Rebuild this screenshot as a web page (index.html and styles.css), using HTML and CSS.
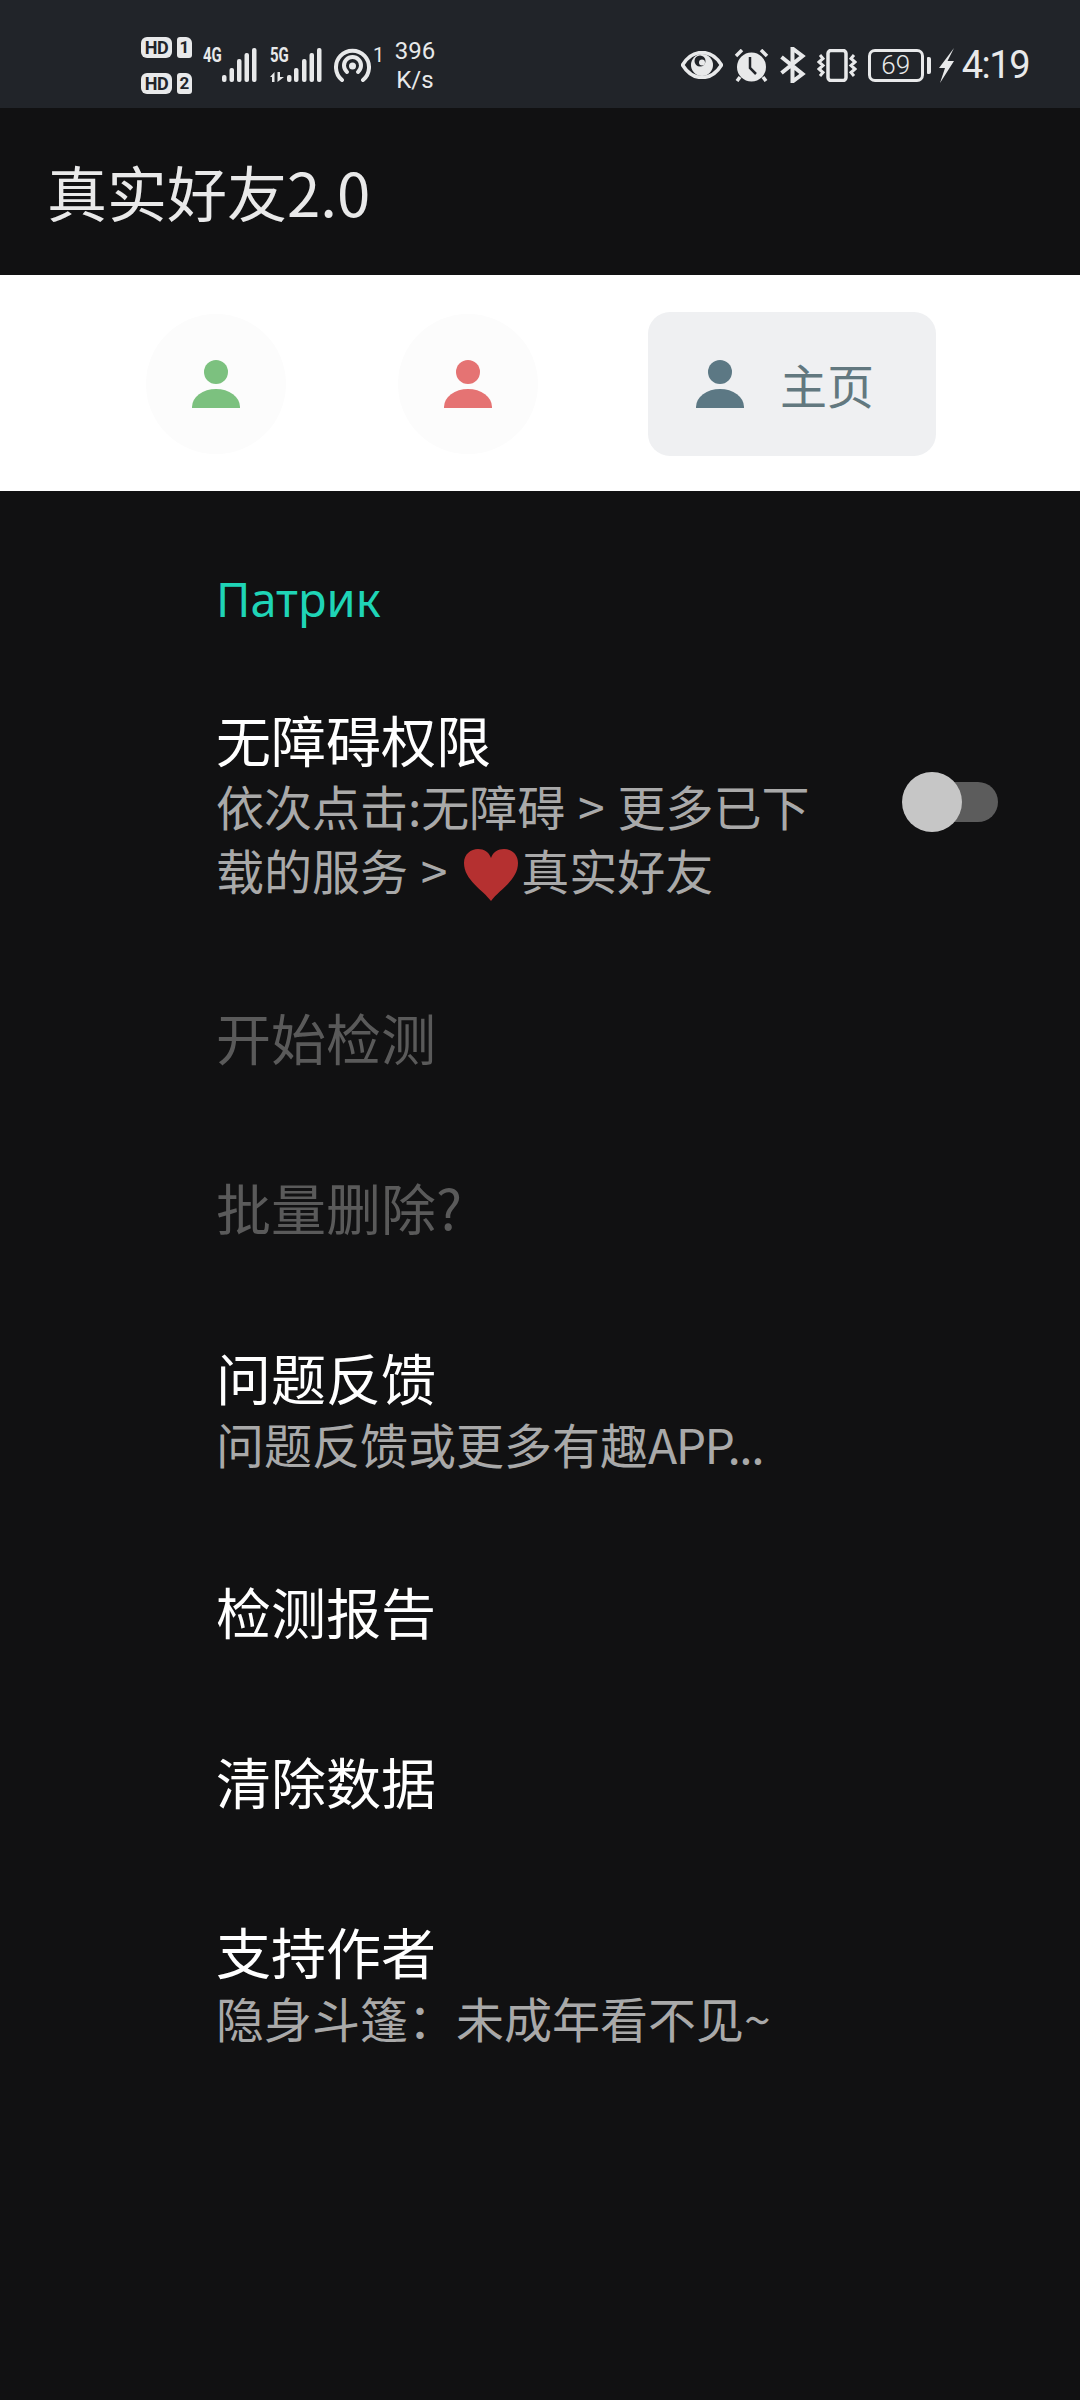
FILE: index.html
```html
<!DOCTYPE html>
<html lang="zh">
<head>
<meta charset="utf-8">
<title>真实好友2.0</title>
<link rel="stylesheet" href="styles.css">
</head>
<body>
<div class="status">
  <div class="status-left">
    <div class="sims">
      <div class="sim"><span class="hd">HD</span><span class="simnum">1</span></div>
      <div class="sim"><span class="hd">HD</span><span class="simnum">2</span></div>
    </div>
    <div class="net net-4g">
      <span class="gen">4G</span>
      <svg width="35" height="34" viewBox="0 0 35 34"><g fill="#e8e9ea"><rect x="0" y="27" width="4.500" height="7" rx="2"/><rect x="7.500" y="20" width="4.500" height="14" rx="2"/><rect x="15" y="11" width="4.500" height="23" rx="2"/><rect x="22.500" y="5" width="4.500" height="29" rx="2"/><rect x="30" y="0" width="4.500" height="34" rx="2"/></g></svg>
    </div>
    <div class="net net-5g">
      <span class="gen">5G</span>
      <svg width="52" height="34" viewBox="0 0 52 34"><g fill="#e8e9ea"><path d="M0 29l4.500-5v10H2V29zM7.500 24H10v5h4l-6.500 5z"/><rect x="17" y="27" width="4.500" height="7" rx="2"/><rect x="24" y="20" width="4.500" height="14" rx="2"/><rect x="32" y="11" width="4.500" height="23" rx="2"/><rect x="39.500" y="5" width="4.500" height="29" rx="2"/><rect x="47" y="0" width="4.500" height="34" rx="2"/></g></svg>
    </div>
    <svg class="hotspot" width="37" height="34" viewBox="0 0 37 34"><g fill="none" stroke="#e8e9ea" stroke-width="4" stroke-linecap="round"><path d="M8 32A16.500 16.500 0 1 1 29 32"/><path d="M13 24A8.500 8.500 0 1 1 24 24"/></g><circle cx="18.500" cy="18" r="3.500" fill="#e8e9ea"/></svg>
    <span class="hotnum">1</span>
    <div class="speed"><span>396</span><span>K/s</span></div>
  </div>
  <div class="status-right">
    <svg width="42" height="28" viewBox="0 0 42 28"><path d="M1.500 14C7 5 14 1.500 21 1.500S35 5 40.500 14C35 23 28 26.500 21 26.500S7 23 1.500 14z" fill="none" stroke="#e8e9ea" stroke-width="3.500"/><circle cx="21" cy="14" r="11" fill="#e8e9ea"/><circle cx="19" cy="10" r="5.500" fill="#212429"/><circle cx="21" cy="11.500" r="3" fill="#e8e9ea"/></svg>
    <svg width="35" height="33" viewBox="0 0 35 33"><circle cx="17.500" cy="18" r="14.500" fill="#e8e9ea"/><path d="M2 7l6-6M33 7l-6-6M6 28l-3 4M29 28l3 4" stroke="#e8e9ea" stroke-width="3.500" fill="none"/><path d="M16 8v11l6 6" stroke="#212429" stroke-width="2.500" fill="none"/></svg>
    <svg width="26" height="36" viewBox="0 0 26 36"><path d="M1.500 10l21 17-10 7.500V1.500l10 7.500-21 17" fill="none" stroke="#e8e9ea" stroke-width="4"/></svg>
    <svg width="40" height="33" viewBox="0 0 40 33"><rect x="11" y="1.500" width="18" height="30" rx="3" fill="none" stroke="#e8e9ea" stroke-width="3.500"/><path d="M3 6l3 3.500L2 13l4 3.500L2 20l4 3.500L3 27M37 6l-3 3.500 4 3.500-4 3.500 4 3.500-4 3.500 3 3.500" fill="none" stroke="#e8e9ea" stroke-width="3"/></svg>
    <div class="battery"><div class="batt-body">69</div><div class="batt-tip"></div></div>
    <svg class="bolt" width="15" height="35" viewBox="0 0 15 35"><path d="M15 0L0 20h6L1 35l14-22H8.500z" fill="#e8e9ea"/></svg>
    <span class="clock">4:19</span>
  </div>
</div>

<header class="appbar">真实好友2.0</header>

<nav class="tabs">
  <div class="tab-round">
    <svg class="person" width="48" height="48" viewBox="0 0 48 48"><ellipse cx="24" cy="12" rx="12" ry="12" fill="#7cc17f"/><path d="M0 48V47A24 18 0 0 1 48 47V48z" fill="#7cc17f"/></svg>
  </div>
  <div class="tab-round">
    <svg class="person" width="48" height="48" viewBox="0 0 48 48"><ellipse cx="24" cy="12" rx="12" ry="12" fill="#e57373"/><path d="M0 48V47A24 18 0 0 1 48 47V48z" fill="#e57373"/></svg>
  </div>
  <div class="tab-pill">
    <svg class="person" width="48" height="48" viewBox="0 0 48 48"><ellipse cx="24" cy="12" rx="12" ry="12" fill="#5c7884"/><path d="M0 48V47A24 18 0 0 1 48 47V48z" fill="#5c7884"/></svg>
    <span class="pill-label">主页</span>
  </div>
</nav>

<main class="list">
  <div class="category">Патрик</div>

  <div class="row row-switch">
    <div class="row-text">
      <div class="row-title">无障碍权限</div>
      <div class="row-sub">依次点击:无障碍 &gt; 更多已下载的服务 &gt; <svg class="heart" width="56" height="53" viewBox="0 0 56 53"><path d="M28 53C20 42 1 32 1 15 1 6 8 1 15 1c6 0 11 3 13 9C30 4 35 1 41 1c7 0 14 5 14 14 0 17-19 27-27 38z" fill="#b53030"/></svg>真实好友</div>
    </div>
    <div class="switch"><div class="switch-knob"></div></div>
  </div>

  <div class="row"><div class="row-title row-off">开始检测</div></div>
  <div class="row"><div class="row-title row-off">批量删除?</div></div>

  <div class="row">
    <div class="row-text row-text-wide">
      <div class="row-title">问题反馈</div>
      <div class="row-sub">问题反馈或更多有趣<span class="latin-tight">APP...</span></div>
    </div>
  </div>

  <div class="row"><div class="row-title">检测报告</div></div>
  <div class="row"><div class="row-title">清除数据</div></div>

  <div class="row">
    <div class="row-text row-text-wide">
      <div class="row-title">支持作者</div>
      <div class="row-sub">隐身斗篷：未成年看不见~</div>
    </div>
  </div>
</main>
</body>
</html>
```

FILE: styles.css
```css
* { box-sizing: border-box; }
html, body { margin: 0; padding: 0; }
body {
  width: 1080px;
  height: 2400px;
  overflow: hidden;
  background: #111112;
  font-family: "Noto Sans CJK SC", "Noto Sans", sans-serif;
  color: #fff;
}

/* status bar */
.status {
  height: 108px;
  background: #212429;
  display: flex;
  align-items: flex-start;
  justify-content: space-between;
  padding: 36px 51px 0 141px;
  color: #e8e9ea;
  font-family: Roboto, "Noto Sans", sans-serif;
}
.status-left { display: flex; align-items: flex-start; }
.status-right { display: flex; align-items: center; height: 36px; margin-top: 11px; gap: 11px; }
.sims { display: flex; flex-direction: column; gap: 14px; width: 51px; margin-top: 1px; }
.sim { display: flex; gap: 5px; height: 22px; }
.hd, .simnum {
  background: #e8e9ea;
  color: #212429;
  font-weight: 700;
  line-height: 21px;
  height: 21px;
  text-align: center;
  border-radius: 6px;
}
.hd { width: 31px; font-size: 18px; letter-spacing: -0.5px; }
.simnum { width: 15px; font-size: 17px; border-radius: 3px 6px 3px 3px; }
.net { display: flex; align-items: flex-end; margin-top: 12px; height: 34px; position: relative; }
.net-4g { margin-left: 11px; width: 54px; justify-content: flex-end; }
.net-5g { margin-left: 13px; width: 52px; }
.gen {
  position: absolute;
  left: 0;
  top: 0;
  font-size: 20px;
  line-height: 15px;
  font-weight: 700;
  transform: scaleX(0.75);
  transform-origin: left;
}
.hotspot { margin: 12px 0 0 12px; }
.hotnum { font-size: 20px; line-height: 20px; margin: 9px 0 0 2px; width: 12px; }
.speed {
  display: flex;
  flex-direction: column;
  align-items: center;
  font-size: 24px;
  line-height: 29px;
  width: 40px;
  margin: 1px 0 0 10px;
}
.battery { display: flex; align-items: center; height: 33px; gap: 3px; }
.batt-body {
  width: 56px;
  height: 33px;
  border: 3px solid #e8e9ea;
  border-radius: 7px;
  font-size: 26px;
  font-weight: 300;
  line-height: 27px;
  text-align: center;
}
.batt-tip { width: 4px; height: 17px; background: #e8e9ea; border-radius: 1px 2px 2px 1px; }
.bolt { margin-left: -3px; }
.clock { font-size: 38px; font-weight: 400; line-height: 36px; letter-spacing: -1.500px; margin-left: -3px; }

/* app bar */
.appbar {
  height: 167px;
  background: #111112;
  padding-left: 47px;
  font-size: 60px;
  line-height: 166px;
  color: #e9e9e9;
}

/* tabs */
.tabs {
  height: 216px;
  background: #fff;
  display: flex;
  align-items: center;
  padding: 2px 0 0 146px;
}
.tab-round {
  width: 140px;
  height: 140px;
  border-radius: 50%;
  background: #fcfcfc;
  display: flex;
  align-items: center;
  justify-content: center;
  margin-right: 112px;
}
.tab-round + .tab-pill { margin-left: -2px; }
.person { display: block; }
.tab-pill {
  width: 288px;
  height: 144px;
  border-radius: 22px;
  background: #eff0f2;
  display: flex;
  align-items: center;
  padding-left: 48px;
  gap: 36px;
}
.pill-label { font-size: 47px; line-height: 56px; color: #62787f; }

/* list */
.category {
  height: 165px;
  padding: 83px 0 0 216px;
  font-size: 47px;
  line-height: 50px;
  font-weight: 400;
  color: #1fd4b6;
  font-family: "Noto Sans", sans-serif;
}
.row {
  display: flex;
  align-items: center;
  padding: 47px 82px 53px 216px;
}
.row-text { width: 620px; }
.row-text-wide { width: 760px; }
.row-title { font-size: 55px; line-height: 70px; color: #fff; }
.row-off { color: #5a5a5a; }
.row-sub { font-size: 48px; line-height: 64px; color: #a9a9a9; word-spacing: 2px; }
.latin-tight { letter-spacing: -1.500px; }
.heart { vertical-align: -11px; margin: 0 2px 0 3px; }
.switch {
  position: relative;
  width: 65px;
  height: 40px;
  margin-left: auto;
  background: #5c5c5c;
  border-radius: 20px;
}
.switch-knob {
  position: absolute;
  left: -31px;
  top: -10px;
  width: 60px;
  height: 60px;
  border-radius: 50%;
  background: #c6c6c6;
}
```
